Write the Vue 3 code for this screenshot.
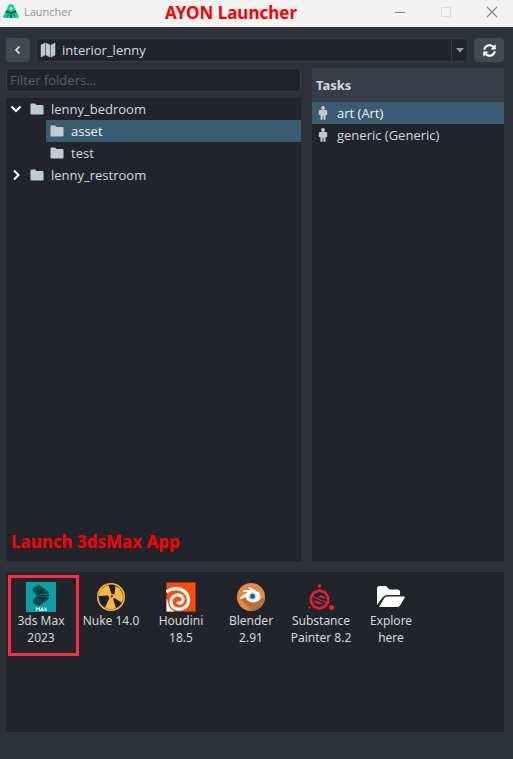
<script setup>
import { ref } from 'vue'

const project = ref('interior_lenny')
const filter = ref('')
const selectedFolder = ref('asset')
const selectedTask = ref('art (Art)')

const folders = [
  { name: 'lenny_bedroom', arrow: 'down', child: false },
  { name: 'asset', child: true },
  { name: 'test', child: true },
  { name: 'lenny_restroom', arrow: 'right', child: false },
]
const tasks = ['art (Art)', 'generic (Generic)']
const apps = [
  { id: 'max', lines: ['3ds Max', '2023'] },
  { id: 'nuke', lines: ['Nuke 14.0'] },
  { id: 'houdini', lines: ['Houdini', '18.5'] },
  { id: 'blender', lines: ['Blender', '2.91'] },
  { id: 'substance', lines: ['Substance', 'Painter 8.2'] },
  { id: 'explore', lines: ['Explore', 'here'] },
]
</script>

<template>
  <div class="window">
    <header class="titlebar">
      <svg class="logo" viewBox="0 0 16 16">
        <path d="M8 0C9.500 0 10.500 1 11 2.500L15.500 11.500C16.200 13.200 15.500 14 14 14H2C.500 14-.200 13.200.500 11.500L5 2.500C5.500 1 6.500 0 8 0Z" fill="#00d7a0" />
        <path d="M3 7.500L8 9L13 7.500M8 9V14" stroke="#14323a" stroke-width="1.400" fill="none" />
        <path d="M5.500 10L4.500 12.500M10.500 10L11.500 12.500" stroke="#14323a" stroke-width=".8" />
        <circle cx="8" cy="4.500" r="1.400" fill="#f3f3f3" />
      </svg>
      <span class="caption">Launcher</span>
      <div class="controls">
        <button aria-label="Minimize"><svg viewBox="0 0 12 12"><path d="M1 6.500H11" stroke="#868686" /></svg></button>
        <button aria-label="Maximize" disabled><svg viewBox="0 0 12 12"><rect x="1.500" y="1.500" width="9" height="9" rx="1" fill="none" stroke="#dedede" /></svg></button>
        <button aria-label="Close"><svg viewBox="0 0 12 12"><path d="M1 1L11 11M11 1L1 11" stroke="#868686" stroke-width="1.200" /></svg></button>
      </div>
      <h1 class="note title-note">AYON Launcher</h1>
    </header>

    <main class="body">
      <div class="toolbar">
        <button class="tool back" aria-label="Back">
          <svg viewBox="0 0 10 10"><path d="M6.500 1.500L3 5L6.500 8.500" fill="none" stroke="#f0f2f4" stroke-width="1.500" /></svg>
        </button>
        <div class="combo">
          <svg class="map" viewBox="0 0 16 16">
            <path d="M1 3L5 1V13L1 15ZM6 1L10 3V15L6 13ZM11 3L15 1V13L11 15Z" fill="#bfccd6" stroke="#bfccd6" stroke-width=".5" stroke-linejoin="round" />
          </svg>
          <select v-model="project" aria-label="Project"><option>interior_lenny</option></select>
          <span class="drop"><svg viewBox="0 0 8 5"><path d="M0 0H8L4 4.500Z" fill="#9c9c9c" /></svg></span>
        </div>
        <button class="tool refresh" aria-label="Refresh">
          <svg viewBox="0 0 512 512" fill="#ffffff">
            <path d="M370.720 133.280C339.460 104.010 298.890 87.960 255.850 88C178.390 88.070 111.530 141.180 93.070 214.870C91.730 220.210 86.970 224 81.460 224H24.100C16.610 224 10.920 217.190 12.310 209.820C33.930 94.920 134.810 8 256 8C322.450 8 382.790 34.140 427.130 76.690L463.030 41C478.150 26 504 36.700 504 58V192C504 205.200 493.200 216 480 216H345.940C324.600 216 313.900 190.100 328.970 175ZM32 296H166.060C187.400 296 198.100 321.900 183.030 337L141.280 378.730C172.540 408 213.120 424.040 256.160 424C333.580 423.930 400.460 370.850 418.930 297.130C420.270 291.800 425.030 288 430.540 288H487.900C495.390 288 501.080 294.810 499.690 302.180C478.070 417.080 377.190 504 256 504C189.550 504 129.210 477.860 84.870 435.310L49 471C33.900 486 8 475.300 8 454V320C8 306.700 18.700 296 32 296Z" />
          </svg>
        </button>
      </div>

      <div class="panes">
        <section class="left">
          <input v-model="filter" class="filter" type="text" placeholder="Filter folders..." aria-label="Filter folders">
          <div class="tree">
            <ul>
              <li v-for="f in folders" :key="f.name">
                <span v-if="f.child" class="indent"></span>
                <svg v-else class="arrow" viewBox="0 0 12 12">
                  <path :d="f.arrow === 'down' ? 'M1.500 3.500L6 8L10.500 3.500' : 'M4 1.500L8.500 6L4 10.500'" fill="none" stroke="#ffffff" stroke-width="2" />
                </svg>
                <button class="row folder" :class="{ selected: selectedFolder === f.name }" @click="selectedFolder = f.name">
                  <svg viewBox="0 0 14 12"><path d="M1.500.500H5L6.500 2H12.500Q13.500 2 13.500 3V10.500Q13.500 11.500 12.500 11.500H1.500Q.500 11.500.500 10.500V1.500Q.500.500 1.500.500Z" fill="#bfccd6" /></svg>
                  {{ f.name }}
                </button>
              </li>
            </ul>
            <p class="note">Launch 3dsMax App</p>
          </div>
        </section>

        <section class="tasks">
          <h2>Tasks</h2>
          <ul>
            <li v-for="t in tasks" :key="t">
              <button class="row task" :class="{ selected: selectedTask === t }" @click="selectedTask = t">
                <svg viewBox="0 0 10 14" fill="#c4c8cc">
                  <circle cx="5" cy="2" r="1.900" />
                  <path d="M2 4H8Q9.200 4 9.200 5.200V9H7.600V13.700H5.400V10H4.600V13.700H2.400V9H.800V5.200Q.800 4 2 4Z" />
                </svg>
                {{ t }}
              </button>
            </li>
          </ul>
        </section>
      </div>

      <section class="apps">
        <button v-for="a in apps" :key="a.id" class="app" :class="{ marked: a.id === 'max' }">
          <svg v-if="a.id === 'max'" viewBox="0 0 30 30">
            <rect width="30" height="30" fill="#0b9fa1" />
            <path d="M7 6L13 3L23 10V17L13 24L7 21V18L11 13.500L7 9Z" fill="#0a5258" />
            <path d="M7 6L13 3L16 7L10 9ZM7 18L13 16L16 20L13 24L7 21Z" fill="#1c474e" />
            <path d="M7 9L10 9L16 7L20 11L11 13Z" fill="#0b3b42" />
            <path d="M10.500 13.200L23 11.500V15.500L10.500 14.200Z" fill="#0b9fa1" />
            <path d="M9 13.500L23 12.500V14.500Z" fill="#04272d" />
            <path d="M11 14.500L21 14.800L16 20L13 16Z" fill="#06333a" />
            <path d="M10.500 29V25.500L12 27.500L13.500 25.500V29M14.500 29L16 25.500L17.500 29M15 28H17M18.500 25.500L20.500 29M20.500 25.500L18.500 29" fill="none" stroke="#e8ffff" stroke-width="1" />
          </svg>
          <svg v-else-if="a.id === 'nuke'" viewBox="0 0 30 30">
            <circle cx="15" cy="15" r="13.200" fill="#202126" stroke="#f9b73c" stroke-width="1.600" />
            <path d="M3 14C3 8.500 7 4.200 12.500 3.200L15.500 12L18.500 12.500L19.500 4C24 6 27 10 27 15C27 17.500 26.500 19 25.500 20.500L18.500 16L17 17L20 26C16.500 27.800 12 27.500 9 25.500L13.500 16L12 13.500Z" fill="#fcb941" />
            <circle cx="15.800" cy="14.300" r="1.100" fill="#202126" />
          </svg>
          <svg v-else-if="a.id === 'houdini'" viewBox="0 0 30 30">
            <rect width="29" height="29" x=".5" y=".5" fill="#ff4b0b" />
            <path d="M.500 10C6 5.500 14 5.500 18.500 9.500C23.500 14 24 21 19.500 24.800C15.500 28.300 8.500 27.800 6 23.500C3.500 19 6 13.500 11 13C15.500 12.500 18 16 16.800 19C15.800 21.500 12.500 21.800 11 20" fill="none" stroke="#ffffff" stroke-width="3.200" />
            <path d="M.500 17C1.500 17 1.700 19 2 21C2.700 25 5 27.500 8.500 29.500H.500Z" fill="#ffffff" />
          </svg>
          <svg v-else-if="a.id === 'blender'" viewBox="0 0 30 30">
            <circle cx="15" cy="15" r="14" fill="#e78b42" />
            <path d="M22 18L28.800 16C28 23 23 28.500 16 29L10 23L4 16.500L10 15Z" fill="#b96f38" />
            <path d="M4 15.500L12 10H7.500Q6.500 8.500 8 8H15L12 6Q12.500 5 14 5.500L22.500 10Q26.500 14 23 18.500Q17 22.500 11.500 18.500Q10 17 9.800 15L5.500 17Q3.500 17 4 15.500Z" fill="#ffffff" />
            <circle cx="16.500" cy="14.200" r="4.200" fill="#d4dce2" />
            <circle cx="16.500" cy="14.200" r="2.500" fill="#0c659c" />
          </svg>
          <svg v-else-if="a.id === 'substance'" viewBox="0 0 30 30">
            <g fill="#e3212d">
              <circle cx="13.500" cy="4" r="1.800" /><circle cx="3.500" cy="25.500" r="1.100" /><circle cx="25.500" cy="25.500" r="2.600" />
              <path d="M11 15.500L15.500 13L21 17L16.500 16ZM6.500 18.500L11.500 19L17 22L11.500 22Z" />
            </g>
            <path d="M13.500 8.500L19 10.500L22 15V20L19 24.500L13.500 26.500L8 24.500L5 20V15L8 10.500Z" fill="none" stroke="#e3212d" stroke-width="2.600" stroke-linejoin="round" />
            <path d="M6.500 14.500L13 17.500L20.500 20.500" fill="none" stroke="#e3212d" stroke-width="1.300" />
          </svg>
          <svg v-else viewBox="0 0 30 30" fill="#ffffff">
            <path d="M1 23V6.500Q1 4 3.500 4H10L13.500 7.500H21.500Q24 7.500 24 10V13H11Q8 13 6.500 15.500Z" />
            <path d="M3 25L8 16.500Q9 14.500 11 14.500H28Q29.500 14.500 28.500 16L24 23.500Q23 25 21.500 25Z" />
          </svg>
          <span v-for="l in a.lines" :key="l">{{ l }}</span>
        </button>
      </section>
    </main>
  </div>
</template>

<style>
body { background: #2c313a; }
</style>

<style scoped>
* { box-sizing: border-box; margin: 0; }
.window {
  display: flex;
  flex-direction: column;
  min-height: 100vh;
  background: #2c313a;
  color: #d3d8de;
  font-family: "Open Sans", "Noto Sans", sans-serif;
  font-size: 13px;
  line-height: 18px;
}
svg { display: block; flex: none; }
ul { list-style: none; padding: 0; }
button { border: 0; padding: 0; background: none; color: inherit; font: inherit; }
.titlebar {
  position: relative;
  display: flex;
  align-items: center;
  height: 27px;
  padding: 0 4px 4px 3px;
  background: #f3f3f3;
}
.logo { width: 16px; height: 16px; }
.caption {
  margin-left: 5px;
  color: #929292;
  font-size: 11px;
}
.controls { display: flex; margin-left: auto; }
.controls button { display: grid; place-items: center; width: 46px; height: 22px; }
.controls button:last-child { width: 34px; margin-left: 6px; }
.controls svg { width: 12px; height: 12px; }
.note {
  color: #ff0000;
  font-family: "Noto Sans", sans-serif;
  font-size: 17px;
  font-weight: 700;
  line-height: 24px;
}
.title-note { position: absolute; left: 0; right: 51px; top: 1px; text-align: center; pointer-events: none; }
.body {
  flex: 1;
  display: flex;
  flex-direction: column;
  padding: 11px 9px 27px 6px;
}
.toolbar { display: flex; gap: 6px; height: 24px; }
.tool { display: grid; place-items: center; border-radius: 4px; background: #434a56; }
.back { width: 24px; }
.back svg { width: 10px; height: 10px; }
.refresh { width: 30px; }
.refresh svg { width: 13px; height: 13px; }
.combo {
  flex: 1;
  display: flex;
  align-items: center;
  border: 1px solid #373d48;
  border-radius: 4px;
  background: #21252b;
}
.map { width: 16px; height: 16px; margin-left: 3px; }
select {
  flex: 1;
  min-width: 0;
  height: 22px;
  padding: 0 0 0 6px;
  border: 0;
  appearance: none;
  background: none;
  color: inherit;
  font: inherit;
}
.drop { display: grid; place-items: center; width: 16px; height: 22px; border-left: 1px solid #373d48; }
.drop svg { width: 8px; height: 5px; }
.panes { flex: 1; display: flex; gap: 11px; margin-top: 6px; }
.left { flex: 1; display: flex; flex-direction: column; gap: 6px; min-width: 0; }
.filter {
  width: 100%;
  height: 24px;
  padding: 0 3px;
  border: 1px solid #373d48;
  border-radius: 4px;
  background: #21252b;
  color: inherit;
  font: inherit;
}
.filter::placeholder { color: #5a5e64; opacity: 1; }
.tree {
  flex: 1;
  display: flex;
  flex-direction: column;
  justify-content: space-between;
  padding-bottom: 7px;
  background: #21252b;
}
.tree .note { padding-left: 5px; }
.tree li { display: flex; align-items: center; height: 22px; }
.indent { width: 40px; }
.arrow { width: 12px; height: 12px; margin: 0 4px; }
.row { flex: 1; display: flex; align-items: center; height: 22px; text-align: left; }
.folder { gap: 7px; padding-left: 4px; }
.folder svg { width: 14px; height: 12px; }
.selected { background: #395c70; color: #f0f4f7; }
.tasks { width: 192px; background: #21252b; }
.tasks h2 {
  padding: 8px 4px;
  background: #373d48;
  font-family: "Noto Sans", sans-serif;
  font-size: 13px;
  line-height: 18px;
}
.task { width: 100%; gap: 9px; padding-left: 6px; }
.task svg { width: 10px; height: 14px; }
.apps {
  display: flex;
  flex-wrap: wrap;
  align-items: flex-start;
  min-height: 160px;
  margin-top: 11px;
  background: #21252b;
}
.app {
  position: relative;
  display: flex;
  flex-direction: column;
  align-items: center;
  width: 70px;
  padding-top: 10px;
  font-family: "Noto Sans", sans-serif;
  font-size: 12px;
  line-height: 17px;
}
.app svg { width: 30px; height: 30px; }
.marked::after {
  content: "";
  position: absolute;
  inset: 3px -3px -10px 2px;
  border: 3px solid #ff2b40;
}
</style>
